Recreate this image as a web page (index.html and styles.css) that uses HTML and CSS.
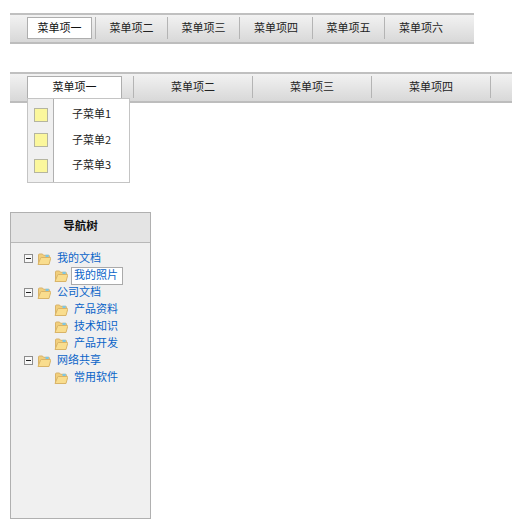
FILE: index.html
```html
<!DOCTYPE html>
<html lang="zh">
<head>
<meta charset="utf-8">
<title>菜单</title>
<link rel="stylesheet" href="styles.css">
</head>
<body>
<svg class="defs" width="0" height="0" aria-hidden="true">
  <symbol id="folder" viewBox="0 0 14 12">
    <path d="M1.5 11V2q0-1 1-1h3l1 1.3h5q1 0 1 1V6" fill="#f2cf7c" stroke="#d8b36a"/>
    <path d="M8.5 1.800h3.200v2.400H8.500z" fill="#7cc6e6"/>
    <path d="M1 11.500h11l1.700-6.200q.2-.8-.7-.8H4.400q-.6 0-.8.600L1 11.500z" fill="#f9dd8e" stroke="#d9b468"/>
  </symbol>
</svg>

<nav class="menu menu-small">
  <div class="menu-item"><span class="menu-tab">菜单项一</span></div>
  <div class="menu-item">菜单项二</div>
  <div class="menu-item">菜单项三</div>
  <div class="menu-item">菜单项四</div>
  <div class="menu-item">菜单项五</div>
  <div class="menu-item menu-item-last">菜单项六</div>
</nav>

<nav class="menu menu-wide">
  <div class="menu-item menu-item-open">
    <span class="menu-tab">菜单项一</span>
    <ul class="submenu">
      <li class="submenu-row"><span class="submenu-icon"><i class="swatch"></i></span><span class="submenu-label">子菜单1</span></li>
      <li class="submenu-row"><span class="submenu-icon"><i class="swatch"></i></span><span class="submenu-label">子菜单2</span></li>
      <li class="submenu-row"><span class="submenu-icon"><i class="swatch"></i></span><span class="submenu-label">子菜单3</span></li>
    </ul>
  </div>
  <div class="menu-item">菜单项二</div>
  <div class="menu-item">菜单项三</div>
  <div class="menu-item">菜单项四</div>
</nav>

<aside class="panel">
  <h2 class="panel-title">导航树</h2>
  <ul class="tree">
    <li class="node"><i class="toggle"></i><svg class="folder"><use href="#folder"/></svg><span class="node-label">我的文档</span></li>
    <li class="node node-child"><svg class="folder"><use href="#folder"/></svg><span class="node-label node-selected">我的照片</span></li>
    <li class="node"><i class="toggle"></i><svg class="folder"><use href="#folder"/></svg><span class="node-label">公司文档</span></li>
    <li class="node node-child"><svg class="folder"><use href="#folder"/></svg><span class="node-label">产品资料</span></li>
    <li class="node node-child"><svg class="folder"><use href="#folder"/></svg><span class="node-label">技术知识</span></li>
    <li class="node node-child"><svg class="folder"><use href="#folder"/></svg><span class="node-label">产品开发</span></li>
    <li class="node"><i class="toggle"></i><svg class="folder"><use href="#folder"/></svg><span class="node-label">网络共享</span></li>
    <li class="node node-child"><svg class="folder"><use href="#folder"/></svg><span class="node-label">常用软件</span></li>
  </ul>
</aside>
</body>
</html>
```
FILE: styles.css
```css
* { box-sizing: border-box; }
html, body { margin: 0; padding: 0; }
body {
  background: #fff;
  padding: 13px 0 0 10px;
  font: 11px/1 "Noto Sans CJK SC", "Liberation Sans", sans-serif;
  color: #222;
}
.defs { position: absolute; }
ul { list-style: none; margin: 0; padding: 0; }

.menu {
  display: flex;
  height: 31px;
  padding: 2px 0 2px 17px;
  border-top: 2px solid #c0c0c0;
  border-bottom: 2px solid #bdbdbd;
  background: linear-gradient(#f2f2f2, #d8d8d8);
}
.menu-small { width: 464px; }
.menu-wide { width: 502px; margin-top: 28px; }

.menu-item {
  display: flex;
  align-items: center;
  justify-content: center;
  width: 72px;
  height: 22px;
  padding-bottom: 2px;
  border-right: 1px solid #b4b4b4;
  color: #222;
}
.menu-item-last { border-right: 0; }
.menu-small .menu-item:first-child { width: 69px; justify-content: flex-start; padding-bottom: 0; }
.menu-small .menu-item:nth-child(4) { width: 73px; }
.menu-wide .menu-item { width: 119px; }
.menu-wide .menu-item:first-child { width: 107px; justify-content: flex-start; padding-bottom: 0; }

.menu-tab {
  display: flex;
  align-items: center;
  justify-content: center;
  width: 65px;
  height: 22px;
  padding-bottom: 2px;
  background: #fff;
  border: 1px solid #aeaeae;
  color: #111;
}
.menu-item-open { position: relative; }
.menu-item-open .menu-tab {
  width: 95px;
  border-bottom: 0;
}

.submenu {
  position: absolute;
  left: 0;
  top: 22px;
  width: 103px;
  height: 85px;
  padding: 3px 0;
  background: linear-gradient(to right, #f0f0f0 25px, #b0b0b0 25px, #b0b0b0 26px, #fff 26px);
  border: 1px solid #c4c4c4;
  z-index: 1;
}
.submenu-row { display: flex; align-items: center; height: 25.5px; }
.submenu-icon { display: flex; justify-content: center; width: 26px; padding-right: 1px; }
.swatch {
  width: 14px;
  height: 14px;
  background: #fbf79c;
  border: 1px solid #b5b5a0;
}
.submenu-label { flex: 1; text-align: center; padding-bottom: 2px; }

.panel {
  width: 141px;
  height: 307px;
  margin-top: 109px;
  background: #f0f0f0;
  border: 1px solid #b0b0b0;
}
.panel-title {
  margin: 0;
  height: 30px;
  padding-bottom: 4px;
  display: flex;
  align-items: center;
  justify-content: center;
  font-size: 11.5px;
  font-weight: 700;
  color: #111;
  background: #e4e4e4;
  border-bottom: 1px solid #b8b8b8;
}
.tree { padding-top: 7px; }
.node {
  display: flex;
  align-items: center;
  height: 17px;
  padding-left: 13px;
}
.node-child { padding-left: 43px; }
.toggle {
  position: relative;
  flex: none;
  width: 9px;
  height: 9px;
  margin-right: 4px;
  background: #f8f8f8;
  border: 1px solid #8c8c8c;
}
.toggle::after {
  content: "";
  position: absolute;
  left: 1px;
  top: 3px;
  width: 5px;
  height: 1px;
  background: #222;
}
.folder { flex: none; width: 14px; height: 12px; margin-right: 6px; }
.node-label { color: #0a64c8; white-space: nowrap; padding-bottom: 2px; }
.node-child .node-label { margin-left: -1px; padding-left: 1px; }
.node-child .node-selected {
  display: flex;
  align-items: center;
  width: 52px;
  height: 18px;
  margin-left: -3px;
  padding-left: 2px;
  background: #fff;
  border: 1px solid #aaa;
}
```
